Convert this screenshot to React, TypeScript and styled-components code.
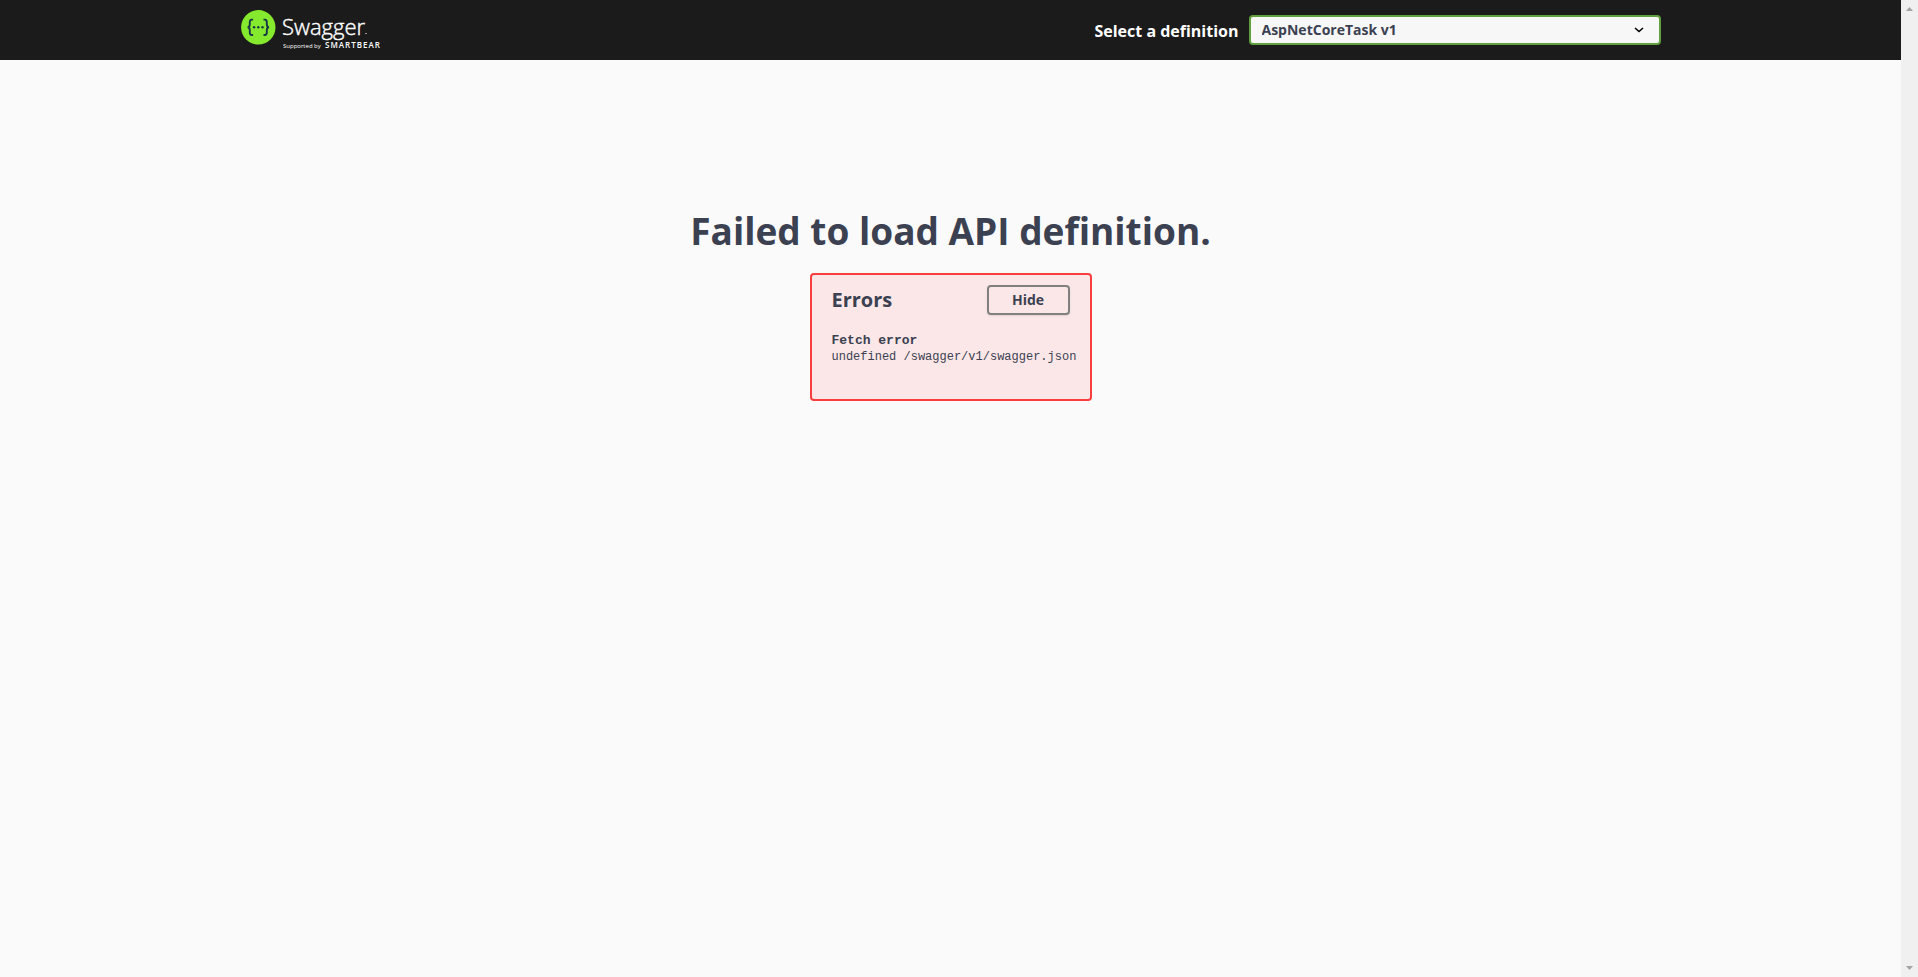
import React, { useState } from "react";
import styled, { createGlobalStyle } from "styled-components";

const ink = "#3b4151";
const sans = `"Open Sans", "Noto Sans", sans-serif`;
const mono = `"Liberation Mono", monospace`;

const GlobalStyle = createGlobalStyle`
  *, *::before, *::after { box-sizing: border-box; }
  body { margin: 0; background: #fafafa; color: ${ink}; font-family: ${sans}; }
`;

const Shell = styled.div`
  display: flex;
  min-height: 100vh;
`;

const Page = styled.div`
  flex: 1;
  min-width: 0;
`;

const ScrollTrack = styled.div`
  position: sticky;
  top: 0;
  display: flex;
  flex-direction: column;
  justify-content: space-between;
  align-items: center;
  width: 17px;
  height: 100vh;
  padding: 7px 0;
  background: #f0f0f0;
`;

const ScrollArrow = styled.svg`
  display: block;
  width: 7px;
  height: 4px;
  fill: #a3a3a3;
`;

const Topbar = styled.header`
  background: #1b1b1b;
`;

const TopbarInner = styled.div`
  display: flex;
  align-items: center;
  justify-content: space-between;
  max-width: 1460px;
  height: 60px;
  margin: 0 auto;
  padding: 0 20px;
`;

const LogoLink = styled.a`
  display: block;
  height: 40px;
`;

const LogoArt = styled.svg`
  display: block;
  width: 144px;
  height: 40px;
  overflow: visible;
  font-family: ${sans};
`;

const Definition = styled.div`
  display: flex;
  align-items: center;
  gap: 10px;
`;

const DefinitionLabel = styled.label`
  padding-top: 2px;
  color: #fff;
  font-size: 16px;
  line-height: 22px;
  font-weight: 700;
`;

const SelectBox = styled.div`
  position: relative;
  width: 412px;
`;

const DefinitionSelect = styled.select`
  display: block;
  appearance: none;
  width: 100%;
  height: 30px;
  padding: 0 40px 0 11px;
  border: 2px solid #62a03f;
  border-radius: 4px;
  background: #f7f7f7;
  color: ${ink};
  font-family: ${sans};
  font-size: 14px;
  line-height: 20px;
  font-weight: 700;
`;

const Chevron = styled.svg`
  position: absolute;
  top: 12px;
  right: 17px;
  width: 10px;
  height: 6px;
  fill: none;
  stroke: #000;
  stroke-width: 1.6;
  pointer-events: none;
`;

const Content = styled.main`
  display: flex;
  flex-direction: column;
  align-items: center;
  padding: 144px 20px 40px;
`;

const Title = styled.h1`
  margin: 0 0 16px;
  font-size: 37px;
  line-height: 53px;
  font-weight: 700;
  text-align: center;
`;

const ErrorPanel = styled.section`
  width: 282px;
  min-height: 128px;
  padding: 10px 20px;
  border: 2px solid #f93e3e;
  border-radius: 4px;
  background: #fbe7e8;
`;

const ErrorHeader = styled.div`
  display: flex;
  align-items: center;
  justify-content: space-between;
`;

const ErrorTitle = styled.h2`
  margin: 0;
  font-size: 20px;
  line-height: 30px;
  font-weight: 700;
`;

const HideButton = styled.button`
  width: 83px;
  height: 30px;
  padding: 0;
  border: 2px solid #808080;
  border-radius: 4px;
  background: transparent;
  box-shadow: 0 1px 2px rgba(0, 0, 0, 0.1);
  color: ${ink};
  font-family: ${sans};
  font-size: 14px;
  line-height: 20px;
  font-weight: 700;
`;

const ErrorBody = styled.div`
  padding-top: 18px;
  font-family: ${mono};
  white-space: nowrap;
`;

const ErrorName = styled.h3`
  margin: 0;
  font-size: 13px;
  line-height: 16px;
  font-weight: 700;
`;

const ErrorMessage = styled.p`
  margin: 0;
  font-size: 12px;
  line-height: 16px;
`;

function SwaggerLogo() {
  return (
    <LogoArt viewBox="0 0 144 40" role="img" aria-label="Swagger">
      <circle cx="17.3" cy="17.3" r="17.2" fill="#85ea2d" />
      <g fill="none" stroke="#173647" strokeWidth="1.9">
        <path d="M12.1 9.6h-1.3c-1.8 0-2 1.100-2 2.500v2.200c0 1.900-.5 2.900-2.200 3 1.700.1 2.200 1.100 2.200 3v2.200c0 1.500.2 2.500 2 2.500h1.300" />
        <path d="M22.500 9.600h1.300c1.800 0 2 1.100 2 2.500v2.200c0 1.900.5 2.900 2.200 3-1.700.1-2.200 1.100-2.200 3v2.200c0 1.500-.2 2.500-2 2.500h-1.300" />
      </g>
      <g fill="#173647">
        <circle cx="13.100" cy="17.300" r="1.200" />
        <circle cx="17.300" cy="17.300" r="1.200" />
        <circle cx="21.500" cy="17.300" r="1.200" />
      </g>
      <text x="41" y="25" fill="#fff" stroke="#fff" strokeWidth="0.4" fontSize="22" fontWeight="300">Swagger</text>
      <rect x="124" y="23" width="2" height="1" fill="#999" />
      <text x="42" y="38" fill="#fff" fontSize="6" fontWeight="500">Supported by</text>
      <text x="84" y="38" fill="#fff" fontSize="8" fontWeight="600" letterSpacing="1">SMARTBEAR</text>
    </LogoArt>
  );
}

export default function App() {
  const [open, setOpen] = useState(true);
  return (
    <>
      <GlobalStyle />
      <Shell>
        <Page>
          <Topbar>
            <TopbarInner>
              <LogoLink href="#">
                <SwaggerLogo />
              </LogoLink>
              <Definition>
                <DefinitionLabel htmlFor="definition">Select a definition</DefinitionLabel>
                <SelectBox>
                  <DefinitionSelect id="definition">
                    <option>AspNetCoreTask v1</option>
                  </DefinitionSelect>
                  <Chevron viewBox="0 0 10 6" aria-hidden="true">
                    <path d="M1 1l4 3.500L9 1" />
                  </Chevron>
                </SelectBox>
              </Definition>
            </TopbarInner>
          </Topbar>
          <Content>
            <Title>Failed to load API definition.</Title>
            <ErrorPanel>
              <ErrorHeader>
                <ErrorTitle>Errors</ErrorTitle>
                <HideButton type="button" onClick={() => setOpen(!open)}>
                  {open ? "Hide" : "Show"}
                </HideButton>
              </ErrorHeader>
              {open && (
                <ErrorBody>
                  <ErrorName>Fetch error</ErrorName>
                  <ErrorMessage>undefined /swagger/v1/swagger.json</ErrorMessage>
                </ErrorBody>
              )}
            </ErrorPanel>
          </Content>
        </Page>
        <ScrollTrack aria-hidden="true">
          <ScrollArrow viewBox="0 0 7 4">
            <path d="M3.500 0L7 4H0z" />
          </ScrollArrow>
          <ScrollArrow viewBox="0 0 7 4">
            <path d="M0 0h7L3.500 4z" />
          </ScrollArrow>
        </ScrollTrack>
      </Shell>
    </>
  );
}
